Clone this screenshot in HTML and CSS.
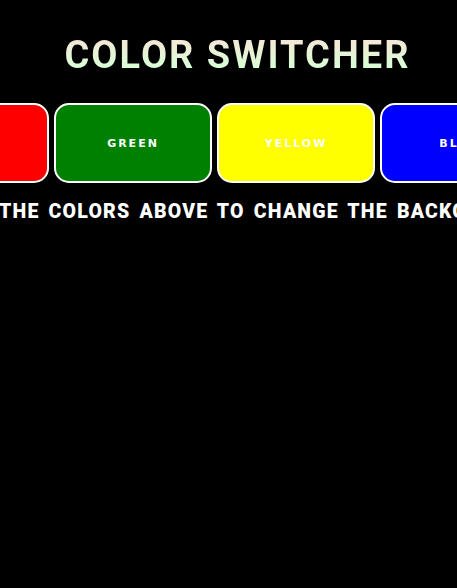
FILE: index.html
```html
<!DOCTYPE html>
<html>
<head>
<meta charset="utf-8">
<link rel="stylesheet" href="styles.css">
</head>
<body>
<div class="page">
  <h1 class="title">COLOR SWITCHER</h1>
  <div class="swatches">
    <button class="swatch red">RED</button>
    <button class="swatch green">GREEN</button>
    <button class="swatch yellow">YELLOW</button>
    <button class="swatch blue">BLUE</button>
  </div>
  <p class="hint">CLICK THE COLORS ABOVE TO CHANGE THE BACKGROUND COLOR</p>
</div>
</body>
</html>
```
FILE: styles.css
```css
html, body {
  margin: 0;
  padding: 0;
  background: #000;
  overflow: hidden;
  height: 100%;
}
.page {
  display: flex;
  flex-direction: column;
  align-items: center;
  padding-top: 33px;
}
.title {
  margin: 0;
  padding-left: 18px;
  font-family: Roboto, "Liberation Sans", sans-serif;
  font-weight: 700;
  font-size: 38px;
  letter-spacing: 2px;
  line-height: 44px;
  background: linear-gradient(to bottom, #f3e9d6 20%, #d8ffd6 80%);
  -webkit-background-clip: text;
  background-clip: text;
  color: transparent;
}
.swatches {
  display: flex;
  gap: 5px;
  margin-top: 26px;
  width: 100%;
  justify-content: flex-start;
}
.swatch {
  flex: 0 0 auto;
  width: 158px;
  height: 80px;
  box-sizing: border-box;
  border: 2px solid #fff;
  border-radius: 15px;
  color: #fff;
  font-family: "DejaVu Sans", "Liberation Sans", sans-serif;
  font-weight: 700;
  font-size: 11px;
  letter-spacing: 2px;
  padding: 0;
}
.swatch.red { background: #f00; margin-left: -109px; }
.swatch.green { background: #008000; }
.swatch.yellow { background: #ff0; }
.swatch.blue { background: #00f; }
.hint {
  align-self: stretch;
  margin: 17px 0 0;
  white-space: nowrap;
  text-indent: -70px;
  font-family: Roboto, "Liberation Sans", sans-serif;
  font-weight: 900;
  font-size: 19.5px;
  letter-spacing: 1.2px;
  word-spacing: 3px;
  color: #fff;
}
```
